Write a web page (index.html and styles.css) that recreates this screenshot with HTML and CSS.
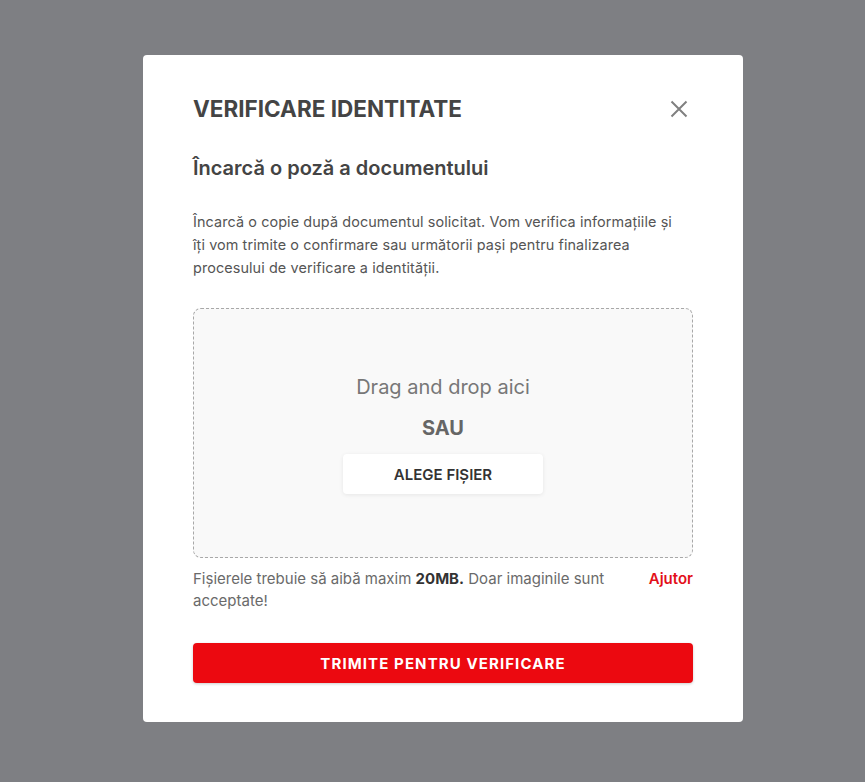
FILE: index.html
```html
<!DOCTYPE html>
<html lang="ro">
<head>
<meta charset="utf-8">
<title>Verificare identitate</title>
<link rel="stylesheet" href="styles.css">
</head>
<body>
<div class="overlay">
  <div class="modal">
    <div class="modal-header">
      <h1 class="title">VERIFICARE IDENTITATE</h1>
      <button class="close" aria-label="Închide">
        <svg width="18" height="18" viewBox="0 0 18 18"><path d="M1.5 1.5L16.5 16.5M16.5 1.5L1.5 16.5" stroke="#808080" stroke-width="2" fill="none"/></svg>
      </button>
    </div>
    <h2 class="subtitle">Încarcă o poză a documentului</h2>
    <p class="desc">Încarcă o copie după documentul solicitat. Vom verifica informațiile și îți vom trimite o confirmare sau următorii pași pentru finalizarea procesului de verificare a identității.</p>
    <div class="dropzone">
      <div class="drop-text">Drag and drop aici</div>
      <div class="or">SAU</div>
      <button class="pick">ALEGE FIȘIER</button>
    </div>
    <div class="note-row">
      <p class="note">Fișierele trebuie să aibă maxim <strong>20MB.</strong> Doar imaginile sunt acceptate!</p>
      <a class="help" href="#">Ajutor</a>
    </div>
    <button class="submit">TRIMITE PENTRU VERIFICARE</button>
  </div>
</div>
</body>
</html>
```
FILE: styles.css
```css
* { box-sizing: border-box; }
html, body { margin: 0; height: 100%; }
body {
  background: #7e7f83;
  font-family: Inter, "Noto Sans", sans-serif;
  color: #444;
}
.overlay {
  padding-top: 55px;
  padding-left: 21px;
  display: flex;
  justify-content: center;
}
.modal {
  width: 600px;
  background: #fff;
  border-radius: 4px;
  padding: 40px 50px 39px;
  display: flex;
  flex-direction: column;
}
.modal-header {
  display: flex;
  justify-content: space-between;
  align-items: center;
}
.title {
  margin: 0;
  font-size: 22.5px;
  line-height: 28px;
  font-weight: 700;
  color: #444;
}
.close {
  border: 0;
  background: none;
  padding: 0;
  margin-right: 5px;
  width: 18px;
  height: 18px;
  display: flex;
}
.subtitle {
  margin: 32px 0 0;
  font-size: 20px;
  line-height: 26px;
  font-weight: 600;
  color: #444;
}
.desc {
  margin: 29px 0 0;
  max-width: 488px;
  font-size: 14.4px;
  letter-spacing: 0.1px;
  line-height: 23px;
  color: #555;
}
.dropzone {
  margin-top: 29px;
  height: 250px;
  background: #f9f9f9;
  border: 1px dashed #a8a8a8;
  border-radius: 8px;
  display: flex;
  flex-direction: column;
  align-items: center;
  padding-top: 65px;
}
.drop-text {
  font-size: 20px;
  line-height: 26px;
  color: #777;
}
.or {
  margin-top: 15px;
  font-size: 20px;
  line-height: 26px;
  font-weight: 700;
  color: #666;
}
.pick {
  margin-top: 13px;
  width: 200px;
  height: 40px;
  border: 0;
  border-radius: 4px;
  background: #fff;
  box-shadow: 0 1px 4px rgba(0,0,0,0.08);
  font-family: inherit;
  font-size: 15px;
  font-weight: 600;
  color: #333;
}
.note-row {
  margin-top: 10px;
  display: flex;
  justify-content: space-between;
  align-items: flex-start;
  gap: 40px;
}
.note {
  margin: 0;
  font-size: 15px;
  line-height: 22px;
  color: #6a6a6a;
  max-width: 420px;
}
.note strong { color: #333; font-weight: 700; }
.help {
  font-size: 15px;
  line-height: 22px;
  font-weight: 600;
  color: #e3101a;
  text-decoration: none;
}
.submit {
  margin-top: 31px;
  height: 40px;
  border: 0;
  border-radius: 4px;
  background: #ec0910;
  color: #fff;
  font-family: inherit;
  font-size: 15px;
  font-weight: 700;
  letter-spacing: 1.1px;
  box-shadow: 0 1px 3px rgba(0,0,0,0.2);
}
```
